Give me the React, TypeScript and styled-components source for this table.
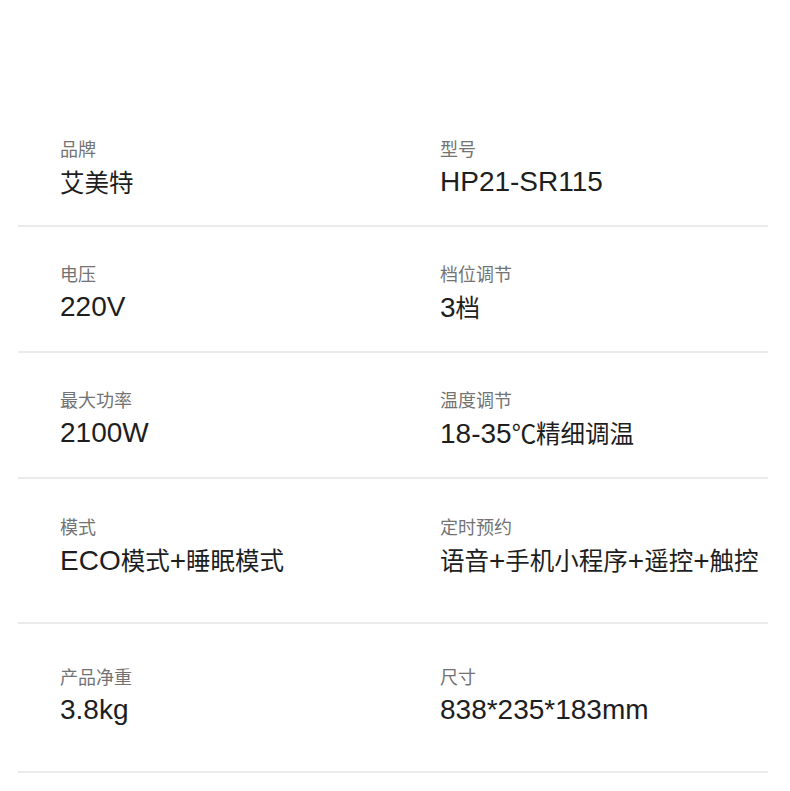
import React from "react";
import styled, { createGlobalStyle } from "styled-components";

const GlobalStyle = createGlobalStyle`
  body {
    margin: 0;
    background: #ffffff;
    font-family: "Liberation Sans", "Noto Sans CJK SC", sans-serif;
  }
`;

interface Spec {
  label: string;
  value: string;
}

interface SpecRowData {
  items: Spec[];
  top: number;
  bottom: number;
}

const rows: SpecRowData[] = [
  {
    items: [
      { label: "品牌", value: "艾美特" },
      { label: "型号", value: "HP21-SR115" },
    ],
    top: 36,
    bottom: 27,
  },
  {
    items: [
      { label: "电压", value: "220V" },
      { label: "档位调节", value: "3档" },
    ],
    top: 36,
    bottom: 28,
  },
  {
    items: [
      { label: "最大功率", value: "2100W" },
      { label: "温度调节", value: "18-35℃精细调温" },
    ],
    top: 36,
    bottom: 28,
  },
  {
    items: [
      { label: "模式", value: "ECO模式+睡眠模式" },
      { label: "定时预约", value: "语音+手机小程序+遥控+触控" },
    ],
    top: 37,
    bottom: 46,
  },
  {
    items: [
      { label: "产品净重", value: "3.8kg" },
      { label: "尺寸", value: "838*235*183mm" },
    ],
    top: 42,
    bottom: 45,
  },
];

// latin runs are set a little larger than the CJK ones, like the original
const renderValue = (text: string) =>
  text.split(/([\u4e00-\u9fff℃]+)/).filter(Boolean).map((part, i) =>
    /[\u4e00-\u9fff℃]/.test(part) ? (
      <Han key={i}>{part}</Han>
    ) : (
      <Latin key={i}>{part}</Latin>
    )
  );

const App = () => {
  return (
    <>
      <GlobalStyle />
      <Page>
        <SpecList>
          {rows.map((row, r) => (
            <SpecRow key={r} $top={row.top} $bottom={row.bottom}>
              {row.items.map((item) => (
                <Cell key={item.label}>
                  <Label>{item.label}</Label>
                  <Value>{renderValue(item.value)}</Value>
                </Cell>
              ))}
            </SpecRow>
          ))}
        </SpecList>
      </Page>
    </>
  );
};

export default App;

const Page = styled.div`
  width: 790px;
  min-height: 791px;
  padding-top: 102px;
  box-sizing: border-box;
  background: #ffffff;
`;

const SpecList = styled.div`
  display: flex;
  flex-direction: column;
  margin-left: 18px;
  width: 750px;
`;

const SpecRow = styled.div<{ $top: number; $bottom: number }>`
  display: grid;
  grid-template-columns: 380px 1fr;
  padding: ${({ $top }) => $top}px 0 ${({ $bottom }) => $bottom}px 42px;
  border-bottom: 2px solid #ebebeb;
`;

const Cell = styled.div`
  display: flex;
  flex-direction: column;
  gap: 8px;
`;

const Label = styled.div`
  font-family: "Noto Sans CJK SC", sans-serif;
  font-size: 18px;
  line-height: 20px;
  color: #737373;
`;

const Value = styled.div`
  height: 32px;
  line-height: 32px;
  color: #1e1e1e;
  white-space: nowrap;
`;

const Han = styled.span`
  font-family: "Noto Sans CJK SC", sans-serif;
  font-size: 24.5px;
`;

const Latin = styled.span`
  font-family: "Liberation Sans", sans-serif;
  font-size: 28px;
`;
